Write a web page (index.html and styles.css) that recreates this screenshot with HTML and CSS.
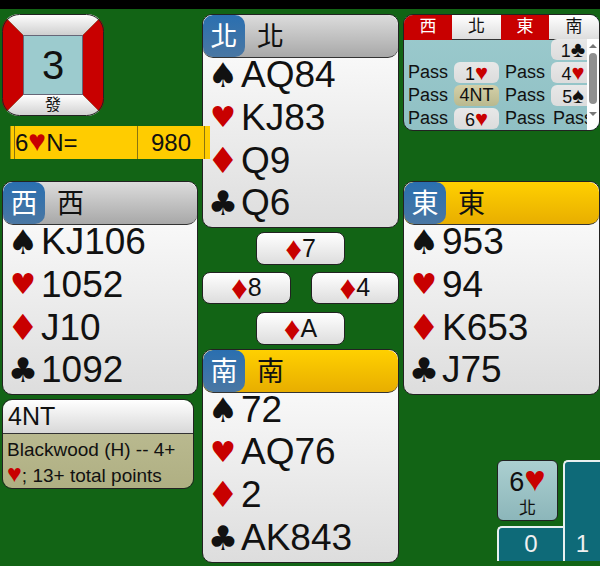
FILE: index.html
```html
<!DOCTYPE html>
<html lang="en">
<head>
    <meta charset="UTF-8">
    <meta name="viewport" content="width=device-width, initial-scale=1.0">
    <title>Bridge</title>
    <link rel="stylesheet" href="styles.css">
</head>
<body>
    <div class="top-bar"></div>
    <main class="board">
        <section class="col col-left">
            <div class="vul">
                <svg class="vul-frame" width="102" height="102" viewBox="0 0 102 102">
                    <defs>
                        <linearGradient id="shade" x1="0" y1="0" x2="0" y2="1">
                            <stop offset="0" stop-color="#ffffff"/>
                            <stop offset="1" stop-color="#cfcfcf"/>
                        </linearGradient>
                        <clipPath id="round">
                            <rect width="102" height="102" rx="17"/>
                        </clipPath>
                    </defs>
                    <g clip-path="url(#round)">
                        <polygon points="0,0 102,0 81,21 21,21" fill="url(#shade)"/>
                        <polygon points="0,102 102,102 81,81 21,81" fill="url(#shade)"/>
                        <polygon points="0,0 21,21 21,81 0,102" fill="#c80000"/>
                        <polygon points="102,0 81,21 81,81 102,102" fill="#c80000"/>
                    </g>
                    <rect x="0.5" y="0.5" width="101" height="101" rx="17" fill="none" stroke="#222"/>
                </svg>
                <div class="vul-center">3</div>
                <span class="vul-dealer">發</span>
            </div>
            <div class="contract">
                <span class="contract-name">6<span class="red">♥</span>N=</span>
                <span class="contract-score">980</span>
            </div>
            <div class="hand hand-west">
                <div class="hand-head"><span class="badge">西</span><span class="name">西</span></div>
                <div class="suit"><span class="pip">♠</span>KJ106</div>
                <div class="suit"><span class="pip pip-h red">♥</span>1052</div>
                <div class="suit"><span class="pip pip-d red">♦</span>J10</div>
                <div class="suit"><span class="pip">♣</span>1092</div>
            </div>
            <div class="explain">
                <div class="explain-head">4NT</div>
                <div class="explain-body">Blackwood (H) -- 4+ <span class="red">♥</span>; 13+ total points</div>
            </div>
        </section>

        <section class="col col-center">
            <div class="hand">
                <div class="hand-head"><span class="badge">北</span><span class="name">北</span></div>
                <div class="suit"><span class="pip">♠</span>AQ84</div>
                <div class="suit"><span class="pip pip-h red">♥</span>KJ83</div>
                <div class="suit"><span class="pip pip-d red">♦</span>Q9</div>
                <div class="suit"><span class="pip">♣</span>Q6</div>
            </div>
            <div class="trick">
                <div class="trick-row trick-mid"><div class="card"><span class="red">♦</span>7</div></div>
                <div class="trick-row trick-sides">
                    <div class="card"><span class="red">♦</span>8</div>
                    <div class="card"><span class="red">♦</span>4</div>
                </div>
                <div class="trick-row trick-mid"><div class="card"><span class="red">♦</span>A</div></div>
            </div>
            <div class="hand">
                <div class="hand-head turn"><span class="badge">南</span><span class="name">南</span></div>
                <div class="suit"><span class="pip">♠</span>72</div>
                <div class="suit"><span class="pip pip-h red">♥</span>AQ76</div>
                <div class="suit"><span class="pip pip-d red">♦</span>2</div>
                <div class="suit"><span class="pip">♣</span>AK843</div>
            </div>
        </section>

        <section class="col col-right">
            <div class="auction">
                <div class="auction-head">
                    <span class="seat seat-vul">西</span>
                    <span class="seat">北</span>
                    <span class="seat seat-vul">東</span>
                    <span class="seat">南</span>
                </div>
                <div class="bids">
                    <span></span><span></span><span></span><span class="bid">1<span class="blk">♣</span></span>
                    <span class="pass">Pass</span><span class="bid">1<span class="red">♥</span></span><span class="pass">Pass</span><span class="bid">4<span class="red">♥</span></span>
                    <span class="pass">Pass</span><span class="bid bid-on">4NT</span><span class="pass">Pass</span><span class="bid">5<span class="blk">♠</span></span>
                    <span class="pass">Pass</span><span class="bid">6<span class="red">♥</span></span><span class="pass">Pass</span><span class="pass">Pass</span>
                </div>
                <div class="scrollbar">
                    <span class="scroll-up"></span>
                    <span class="scroll-thumb"></span>
                    <span class="scroll-down"></span>
                </div>
            </div>
            <div class="hand hand-east">
                <div class="hand-head turn"><span class="badge">東</span><span class="name">東</span></div>
                <div class="suit"><span class="pip">♠</span>953</div>
                <div class="suit"><span class="pip pip-h red">♥</span>94</div>
                <div class="suit"><span class="pip pip-d red">♦</span>K653</div>
                <div class="suit"><span class="pip">♣</span>J75</div>
            </div>
            <div class="status">
                <div class="status-left">
                    <div class="final">
                        <div class="final-bid">6<span class="red">♥</span></div>
                        <div class="final-seat">北</div>
                    </div>
                    <div class="tricks tricks-ns">0</div>
                </div>
                <div class="tricks tricks-ew">1</div>
            </div>
        </section>
    </main>
</body>
</html>
```

FILE: styles.css
```css
* {
    margin: 0;
    padding: 0;
    box-sizing: border-box;
    font-family: "Liberation Sans", "Noto Sans CJK TC", sans-serif;
}

body {
    width: 600px;
    height: 566px;
    overflow: hidden;
    background-color: #126415;
    color: #111;
}

.red {
    color: #c80000;
}

.blk {
    color: #111;
}

.top-bar {
    height: 9px;
    background-color: #000;
}

.board {
    display: grid;
    grid-template-columns: 196px 197px 197px;
    column-gap: 4px;
    padding: 5px 0 0 2px;
}

.col-left {
    position: relative;
    z-index: 1;
}

/* vulnerability box */
.vul {
    position: relative;
    width: 102px;
    height: 102px;
    padding: 21px;
}

.vul-frame {
    position: absolute;
    left: 0;
    top: 0;
}

.vul-center {
    position: relative;
    display: flex;
    align-items: center;
    justify-content: center;
    height: 100%;
    background-color: #9ccbce;
    border: 1px solid #667;
    font-size: 40px;
}

.vul-dealer {
    position: absolute;
    left: 0;
    right: 0;
    bottom: 2px;
    text-align: center;
    font-size: 16px;
    line-height: 18px;
}

.contract {
    display: flex;
    width: 200px;
    height: 33px;
    margin: 10px 0 0 8px;
    background-color: #ffcc00;
    border-left: 1px solid #a88a10;
    font-size: 24px;
    line-height: 33px;
}

.contract-name {
    width: 124px;
    margin-left: 3px;
    border-left: 1px solid #8a7410;
    border-right: 1px solid #8a7410;
}

.contract-name .red {
    font-size: 30px;
    line-height: 1;
}

.contract-score {
    width: 67px;
    border-right: 1px solid #8a7410;
    text-align: center;
}

/* hands */
.hand {
    height: 214px;
    background: linear-gradient(#fff, #ddd);
    border: 1px solid #222;
    border-radius: 10px;
    overflow: hidden;
}

.hand-west {
    margin-top: 22px;
}

.hand-east {
    margin-top: 50px;
}

.hand-head {
    display: flex;
    align-items: center;
    height: 43px;
    margin-bottom: -4px;
    background: linear-gradient(#dcdcdc, #a8a8a8);
    border-bottom: 1px solid #333;
    border-radius: 10px;
    font-size: 27px;
}

.hand-head.turn {
    background: linear-gradient(#ffd000, #e8ae00);
}

.badge {
    display: flex;
    align-items: center;
    justify-content: center;
    width: 42px;
    height: 100%;
    margin-right: 12px;
    padding-bottom: 3px;
    color: #fff;
    background: linear-gradient(#2a6fb0, #4a77a3);
    border-radius: 10px;
}

.name {
    padding-bottom: 3px;
}

.suit {
    display: flex;
    align-items: center;
    height: 42.67px;
    padding-left: 2px;
    font-size: 37px;
}

/* DejaVu's suit glyphs differ in width, sized one by one */
.pip {
    width: 36px;
    font-family: "DejaVu Sans", sans-serif;
    font-size: 34px;
    line-height: 1;
    text-align: center;
}

.pip-h {
    font-size: 29px;
}

.pip-d {
    font-size: 36px;
}

/* explanation */
.explain {
    width: 192px;
    height: 90px;
    margin-top: 4px;
    border: 1px solid #222;
    border-radius: 10px;
    overflow: hidden;
}

.explain-head {
    height: 34px;
    padding-left: 5px;
    background: linear-gradient(#fff, #d8d8d8);
    border-bottom: 1px solid #333;
    font-size: 25px;
    line-height: 33px;
}

.explain-body {
    height: 56px;
    padding: 5px 4px 0;
    background: linear-gradient(#b9b98f, #afaf82);
    font-size: 19px;
    line-height: 22px;
}

.explain-body .red {
    font-size: 25px;
    line-height: 1;
}

/* trick */
.trick-row {
    display: flex;
}

.trick-mid {
    justify-content: center;
    margin: 4px 0;
}

.trick-sides {
    justify-content: space-between;
    margin: 7px 0 8px;
}

.card {
    display: flex;
    align-items: center;
    justify-content: center;
    width: 88.5px;
    height: 32.5px;
    background: linear-gradient(#fff, #ddd);
    border: 1px solid #222;
    border-radius: 8px;
    font-size: 25px;
}

.card .red {
    font-size: 33px;
    line-height: 1;
}

/* auction */
.auction {
    position: relative;
    height: 117px;
    border: 1px solid #222;
    border-radius: 10px;
    overflow: hidden;
    background: linear-gradient(#9ccbce, #90c0c4);
}

.auction-head {
    display: grid;
    grid-template-columns: 48px 49px 48px 1fr;
    height: 24px;
}

.seat {
    text-align: center;
    font-size: 17px;
    line-height: 24px;
    background: linear-gradient(#fff, #ddd);
    border-bottom: 1px solid #333;
}

.seat-vul {
    color: #fff;
    background: #c80000;
    border-bottom-color: #c80000;
}

.bids {
    display: grid;
    grid-template-columns: 48px 49px 48px 48px;
    grid-auto-rows: 23px;
    align-items: center;
    margin-top: -1px;
    font-size: 18px;
    text-align: center;
}

.pass {
    white-space: nowrap;
}

.bid {
    height: 21px;
    margin: 0 2px;
    line-height: 21px;
    background: linear-gradient(#e8e8e8, #dcdcdc);
    border-radius: 6px;
}

.bid .red,
.bid .blk {
    font-size: 22px;
    line-height: 1;
}

.bid-on {
    background: linear-gradient(#d4d0a8, #b9b98f);
}

.scrollbar {
    position: absolute;
    top: 24px;
    right: 0;
    bottom: 0;
    display: flex;
    flex-direction: column;
    align-items: center;
    width: 12px;
    background-color: #fff;
}

.scroll-up,
.scroll-down {
    width: 0;
    height: 0;
    margin: 5px 0;
    border-left: 4px solid transparent;
    border-right: 4px solid transparent;
}

.scroll-up {
    border-bottom: 4px solid #777;
}

.scroll-down {
    margin-top: 8px;
    border-top: 4px solid #777;
}

.scroll-thumb {
    width: 8px;
    height: 51px;
    background-color: #8f8f8f;
    border-radius: 4px;
}

/* bottom right status */
.status {
    display: flex;
    justify-content: flex-end;
    height: 101px;
    margin-top: 65px;
}

.status-left {
    display: flex;
    flex-direction: column;
    justify-content: space-between;
    width: 66px;
}

.final {
    width: 61px;
    height: 61px;
    text-align: center;
    background: linear-gradient(#abcfd0, #8cb6ba);
    border: 1px solid #222;
    border-radius: 6px;
}

.final-bid {
    font-size: 27px;
    line-height: 32px;
}

.final-bid .red {
    font-size: 36px;
    line-height: 1;
}

.final-seat {
    font-size: 17px;
    line-height: 22px;
}

.tricks {
    color: #f0f0f0;
    font-size: 24px;
    text-align: center;
    background-color: #0e6a78;
    border-top: 2px solid #e8f0f0;
    border-left: 2px solid #e8f0f0;
    border-top-left-radius: 5px;
}

.tricks-ns {
    height: 35px;
    line-height: 32px;
}

.tricks-ew {
    width: 37px;
    padding-top: 66px;
    line-height: 32px;
}
```
